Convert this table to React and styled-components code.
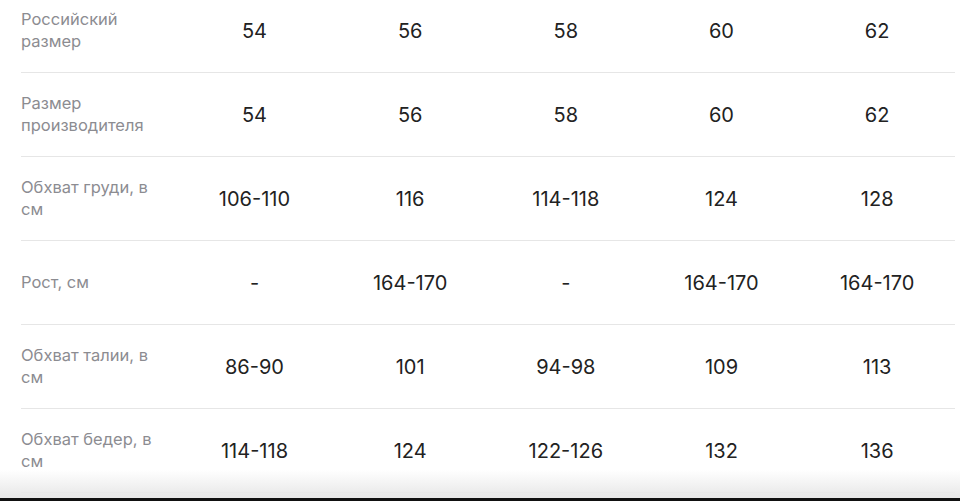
import styled, { createGlobalStyle } from "styled-components"

const rows = [
  { label: "Российский размер", values: ["54", "56", "58", "60", "62"] },
  { label: "Размер производителя", values: ["54", "56", "58", "60", "62"] },
  { label: "Обхват груди, в см", values: ["106-110", "116", "114-118", "124", "128"] },
  { label: "Рост, см", values: ["-", "164-170", "-", "164-170", "164-170"] },
  { label: "Обхват талии, в см", values: ["86-90", "101", "94-98", "109", "113"] },
  { label: "Обхват бедер, в см", values: ["114-118", "124", "122-126", "132", "136"] },
]

const SizeTable = () => {
  return (
    <Page>
      <GlobalStyle />
      <Table>
        {rows.map((row) => (
          <Row key={row.label}>
            <Label>{row.label}</Label>
            {row.values.map((v, i) => (
              <Value key={i}>{v}</Value>
            ))}
          </Row>
        ))}
      </Table>
      <BottomFade />
    </Page>
  )
}
export default SizeTable

//styling

const GlobalStyle = createGlobalStyle`
  html, body {
    margin: 0;
    padding: 0;
    background: #fff;
    overflow: hidden;
  }
  body {
    font-family: Inter, "Noto Sans", sans-serif;
  }
`

const Page = styled.div`
  position: relative;
  width: 960px;
  height: 501px;
  overflow: hidden;
`

const Table = styled.div`
  margin: -11px 5px 0 21px;
  display: flex;
  flex-direction: column;
`

const Row = styled.div`
  height: 84px;
  display: grid;
  grid-template-columns: repeat(6, 1fr);
  align-items: center;
  border-bottom: 1px solid #e6e6e6;
  box-sizing: border-box;
`

const Label = styled.div`
  font-size: 16.5px;
  line-height: 22px;
  color: #8c8c91;
  padding-right: 10px;
  margin-top: -1px;
`

const Value = styled.div`
  font-size: 20px;
  color: #222;
  text-align: center;
  margin-top: 1px;
`

const BottomFade = styled.div`
  position: absolute;
  left: 0;
  right: 0;
  bottom: 0;
  height: 31px;
  background: linear-gradient(to bottom, rgba(255, 255, 255, 0), #e9e9e9 90%);
  border-bottom: 3px solid #111;
  box-sizing: border-box;
`
